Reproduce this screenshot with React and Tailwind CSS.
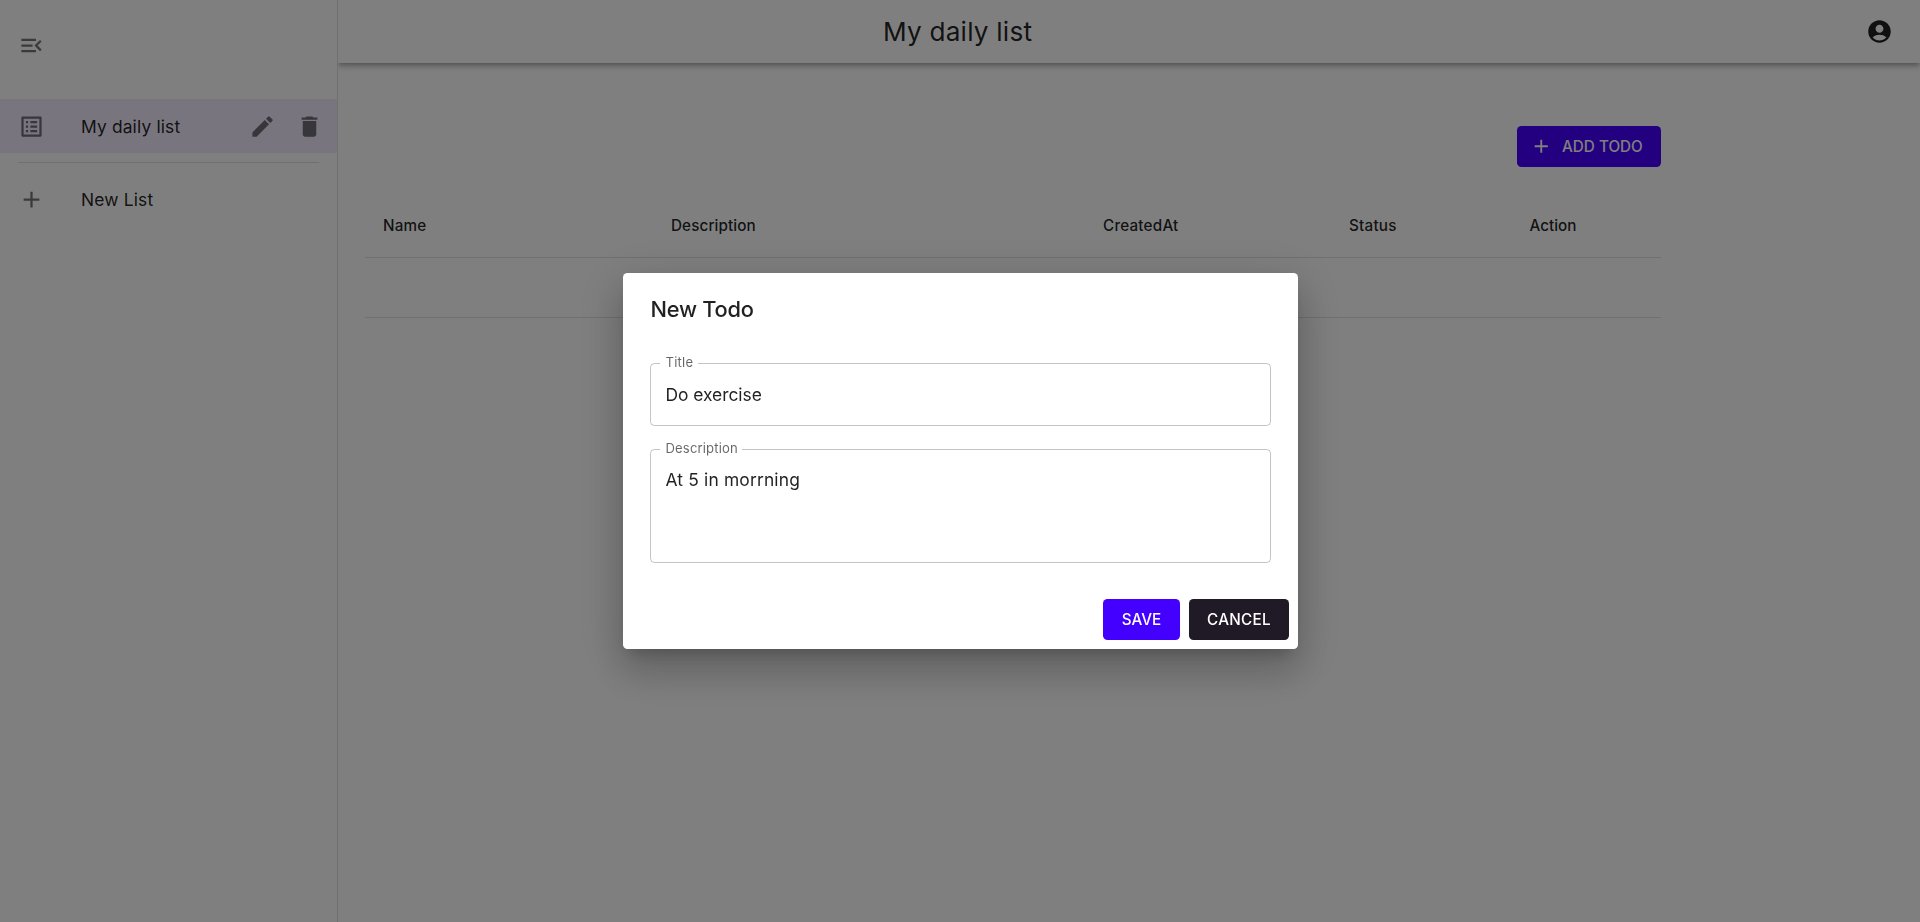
import React from "react";
import { MdMenuOpen, MdListAlt, MdEdit, MdDelete, MdAdd, MdAccountCircle } from "react-icons/md";

function Sidebar() {
  return (
    <aside className="z-20 flex h-full w-[338px] shrink-0 flex-col border-r border-black/12 bg-white">
      <div className="flex h-[99px] items-start px-[18px] pt-8 text-black/54">
        <MdMenuOpen className="size-[27px]" />
      </div>
      <div className="flex h-[54px] items-center bg-[#f0ebff] pl-[18px] text-black/54">
        <MdListAlt className="size-[27px]" />
        <span className="ml-[36px] w-[168px] pt-[2px] text-[17.4px] tracking-[0.15px] text-black/87">My daily list</span>
        <MdEdit className="size-[27px]" />
        <MdDelete className="ml-5 size-[27px]" />
      </div>
      <div className="mx-[18px] mt-[9px] h-px bg-black/12" />
      <div className="mt-[9px] flex h-[54px] items-center pl-[18px] text-black/54">
        <MdAdd className="size-[27px]" />
        <span className="ml-[36px] pt-[2px] text-[17.4px] tracking-[0.16px] text-black/87">New List</span>
      </div>
    </aside>
  );
}

function Header() {
  return (
    <header className="z-10 flex h-[63px] shrink-0 items-center bg-white pl-[545px] pr-[27px] text-black/87 shadow-[0px_2px_4px_-1px_rgba(0,0,0,0.2),0px_4px_5px_0px_rgba(0,0,0,0.14),0px_1px_10px_0px_rgba(0,0,0,0.12)]">
      <h1 className="flex-1 text-[26.2px] tracking-[0.2px]">My daily list</h1>
      <MdAccountCircle className="size-[27px]" />
    </header>
  );
}

function TodoTable() {
  return (
    <div className="ml-[27px] w-[1296px]">
      <div className="flex h-[104px] justify-end pt-[63px]">
        <button className="flex h-[41px] w-36 items-center rounded-[4.5px] bg-[#4400ff] pl-[13px] text-[15.25px] font-medium text-white">
          <MdAdd className="size-[22.5px]" />
          <span className="ml-[9.5px] pt-[2px] whitespace-nowrap">ADD TODO</span>
        </button>
      </div>
      <div className="mt-[27px] grid h-[64px] grid-cols-[288px_432px_246px_181px_149px] items-center border-b border-black/12 pt-[2px] text-[15.25px] font-[450] text-black/87">
        <span className="pl-[18px] tracking-[0.2px]">Name</span>
        <span className="pl-[18px] tracking-[0.1px]">Description</span>
        <span className="pl-[18px] tracking-[0.2px]">CreatedAt</span>
        <span className="pl-[18px] tracking-[0.2px]">Status</span>
        <span className="pl-[17.5px] tracking-[0px]">Action</span>
      </div>
      <div className="h-[60px] border-b border-black/12" />
    </div>
  );
}

function Dialog() {
  return (
    <div className="fixed inset-0 z-30 flex items-center justify-center bg-black/50">
      <div className="flex h-[376px] w-[675px] flex-col rounded-[4.5px] bg-white text-black/87 shadow-[0px_11px_15px_-7px_rgba(0,0,0,0.2),0px_24px_38px_3px_rgba(0,0,0,0.14),0px_9px_46px_8px_rgba(0,0,0,0.12)]">
        <h2 className="h-[80px] shrink-0 pl-[28px] pt-[18px] text-[21.8px] leading-[36px] font-[450] tracking-[-0.25px]">New Todo</h2>
        <fieldset className="mx-[27px] h-[73px] rounded-[4.5px] border border-black/23 pl-[9px]">
          <legend className="h-5 pr-[5px] pl-[6px] text-[13.1px] leading-[18px] tracking-[0.2px] text-black/60">Title</legend>
          <div className="pl-[6px] pt-[9px] text-[17.4px] leading-[26px] tracking-[-0.03px]">Do exercise</div>
        </fieldset>
        <fieldset className="mx-[27px] mt-[13px] h-[124px] rounded-[4.5px] border border-black/23 pl-[9px]">
          <legend className="h-5 pr-[4px] pl-[6px] text-[13.1px] leading-[18px] tracking-[0.14px] text-black/60">Description</legend>
          <div className="pl-[6px] pt-[8px] text-[17.4px] leading-[26px] tracking-[0.17px]">At 5 in morrning</div>
        </fieldset>
        <div className="mt-auto flex justify-end gap-[9px] p-[9px] text-[15.25px] font-medium text-white">
          <button className="h-[41px] w-[77px] rounded-[4.5px] bg-[#4400ff] pt-[2px] pl-px">SAVE</button>
          <button className="h-[41px] w-[100px] rounded-[4.5px] bg-[#201926] pt-[2px] pl-px tracking-[0.3px]">CANCEL</button>
        </div>
      </div>
    </div>
  );
}

export default function App() {
  return (
    <div className="flex h-[922px] w-full overflow-hidden bg-white font-['Inter',sans-serif]">
      <Sidebar />
      <main className="flex min-w-0 flex-1 flex-col">
        <Header />
        <TodoTable />
      </main>
      <Dialog />
    </div>
  );
}
